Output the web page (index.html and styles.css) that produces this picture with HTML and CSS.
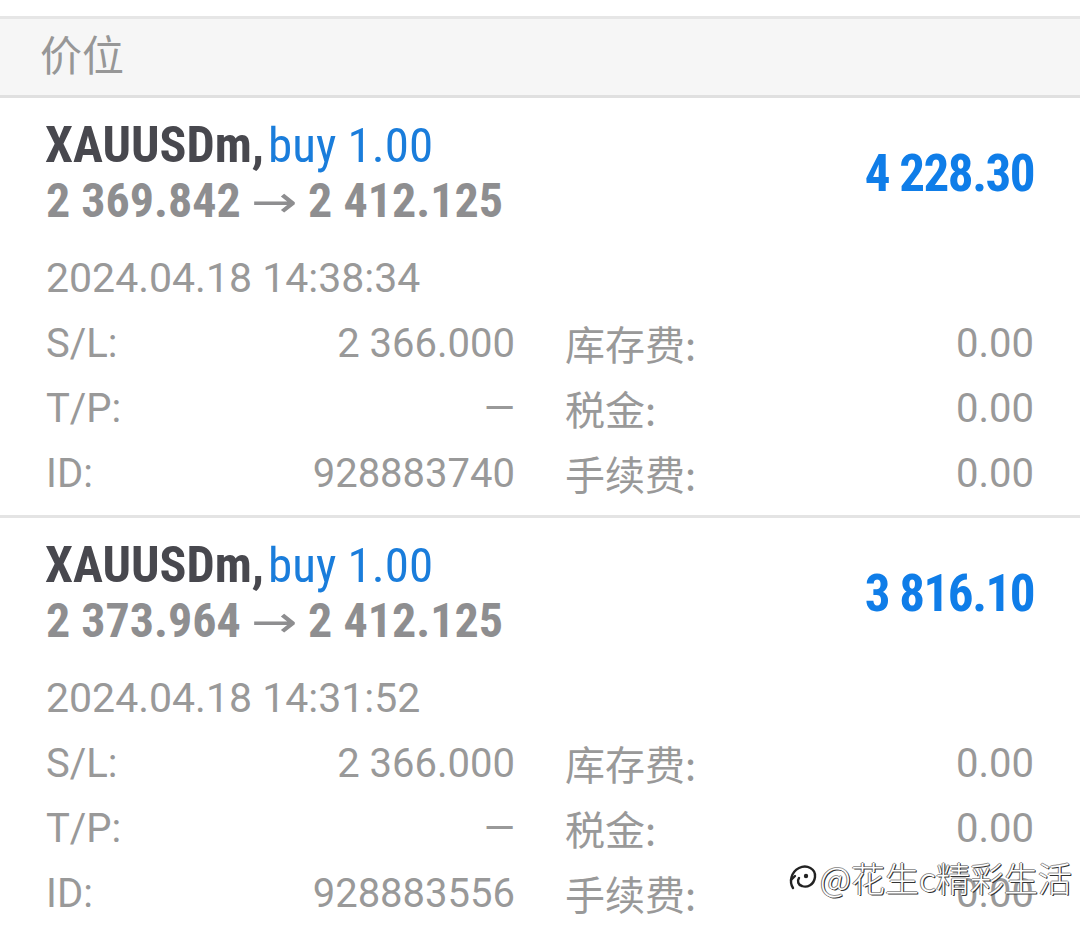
FILE: index.html
```html
<!DOCTYPE html>
<html lang="zh-CN">
<head>
<meta charset="utf-8">
<link rel="stylesheet" href="styles.css">
</head>
<body>
<div class="page">
  <div class="top-gap"></div>
  <div class="section-head">价位</div>

  <div class="card">
    <div class="head">
      <div class="title">
        <div class="line1"><span class="sym">XAUUSDm,</span> <span class="side">buy 1.00</span></div>
        <div class="line2">2 369.842 <span class="arrow">→</span> 2 412.125</div>
      </div>
      <div class="profit">4 228.30</div>
    </div>
    <div class="date">2024.04.18 14:38:34</div>
    <div class="rows">
      <div class="half"><span>S/L:</span><span>2 366.000</span></div>
      <div class="half"><span class="cjk">库存费:</span><span>0.00</span></div>
      <div class="half"><span>T/P:</span><span>—</span></div>
      <div class="half"><span class="cjk">税金:</span><span>0.00</span></div>
      <div class="half"><span>ID:</span><span>928883740</span></div>
      <div class="half"><span class="cjk">手续费:</span><span>0.00</span></div>
    </div>
  </div>

  <div class="card">
    <div class="head">
      <div class="title">
        <div class="line1"><span class="sym">XAUUSDm,</span> <span class="side">buy 1.00</span></div>
        <div class="line2">2 373.964 <span class="arrow">→</span> 2 412.125</div>
      </div>
      <div class="profit">3 816.10</div>
    </div>
    <div class="date">2024.04.18 14:31:52</div>
    <div class="rows">
      <div class="half"><span>S/L:</span><span>2 366.000</span></div>
      <div class="half"><span class="cjk">库存费:</span><span>0.00</span></div>
      <div class="half"><span>T/P:</span><span>—</span></div>
      <div class="half"><span class="cjk">税金:</span><span>0.00</span></div>
      <div class="half"><span>ID:</span><span>928883556</span></div>
      <div class="half"><span class="cjk">手续费:</span><span>0.00</span></div>
    </div>
  </div>

  <div class="watermark">
    <svg class="wm-icon" width="30" height="34" viewBox="0 0 30 34">
      <path d="M5 27 C1 21 3 11 11 7 C19 3 28 8 27 16 C26 24 19 27 14 25 C10 24 9 20 11 17" fill="none" stroke="#fff" stroke-width="4.5" stroke-linecap="round"/>
      <path d="M5 27 C1 21 3 11 11 7 C19 3 28 8 27 16 C26 24 19 27 14 25 C10 24 9 20 11 17" fill="none" stroke="#222" stroke-width="2.4" stroke-linecap="round"/>
      <circle cx="18" cy="15" r="2.2" fill="#222"/>
      <path d="M3 19 L7 15" stroke="#222" stroke-width="2.4" stroke-linecap="round"/>
    </svg>
    <span class="wm-text">@花生c精彩生活</span>
  </div>
</div>
</body>
</html>
```

FILE: styles.css
```css
html, body {
  margin: 0;
  padding: 0;
  background: #ffffff;
}

.page {
  position: relative;
  width: 1080px;
  height: 930px;
  overflow: hidden;
  font-family: Roboto, "Noto Sans CJK SC", sans-serif;
}

.top-gap {
  height: 16px;
}

.section-head {
  height: 68px;
  box-sizing: content-box;
  border-top: 3px solid #e6e6e6;
  border-bottom: 3px solid #e0e0e0;
  background: #f6f6f6;
  padding-left: 40px;
  padding-bottom: 8px;
  display: flex;
  align-items: center;
  font-family: "Noto Sans CJK SC", sans-serif;
  font-size: 42px;
  line-height: 1;
  color: #979797;
}

.card {
  padding: 20px 46px 0;
  height: 397px;
  border-bottom: 3px solid #e4e4e4;
}

.head {
  display: flex;
  justify-content: space-between;
  align-items: center;
}

.title {
  font-family: Roboto, sans-serif;
  font-weight: 700;
  font-stretch: 75%;
  font-size: 48px;
  line-height: 55px;
}

.sym {
  color: #48484e;
  font-size: 50px;
  margin-left: -1px;
}

.side {
  color: #1a7ddb;
  font-weight: 400;
  font-size: 49px;
  margin-left: -7px;
}

.line2 {
  color: #8e8e90;
}

.arrow {
  font-family: "DejaVu Sans", sans-serif;
  font-weight: 400;
  font-size: 44px;
  display: inline-block;
  transform: scaleX(1.4);
  margin: 0 6px 0 6px;
}

.profit {
  font-family: Roboto, sans-serif;
  font-weight: 700;
  font-stretch: 75%;
  font-size: 51px;
  letter-spacing: -1.5px;
  color: #0f7de8;
}

.date {
  margin-top: 20px;
  font-size: 41px;
  line-height: 58px;
  color: #999999;
}

.rows {
  display: grid;
  grid-template-columns: 1fr 1fr;
  column-gap: 50px;
  margin-top: 4px;
  font-size: 40px;
  line-height: 65px;
  color: #999999;
}

.half {
  display: flex;
  justify-content: space-between;
}

.cjk {
  font-family: "Noto Sans CJK SC", sans-serif;
  font-size: 40px;
}

.watermark {
  position: absolute;
  left: 788px;
  top: 853px;
  display: flex;
  align-items: center;
  gap: 2px;
}

.wm-text {
  font-family: "Noto Sans CJK SC", sans-serif;
  font-size: 34px;
  font-weight: 300;
  color: #ffffff;
  text-shadow: 1px 1px 0 #333, -1px 0 0 #777, 0 -1px 0 #999, 1px 0 0 #555;
}
```
